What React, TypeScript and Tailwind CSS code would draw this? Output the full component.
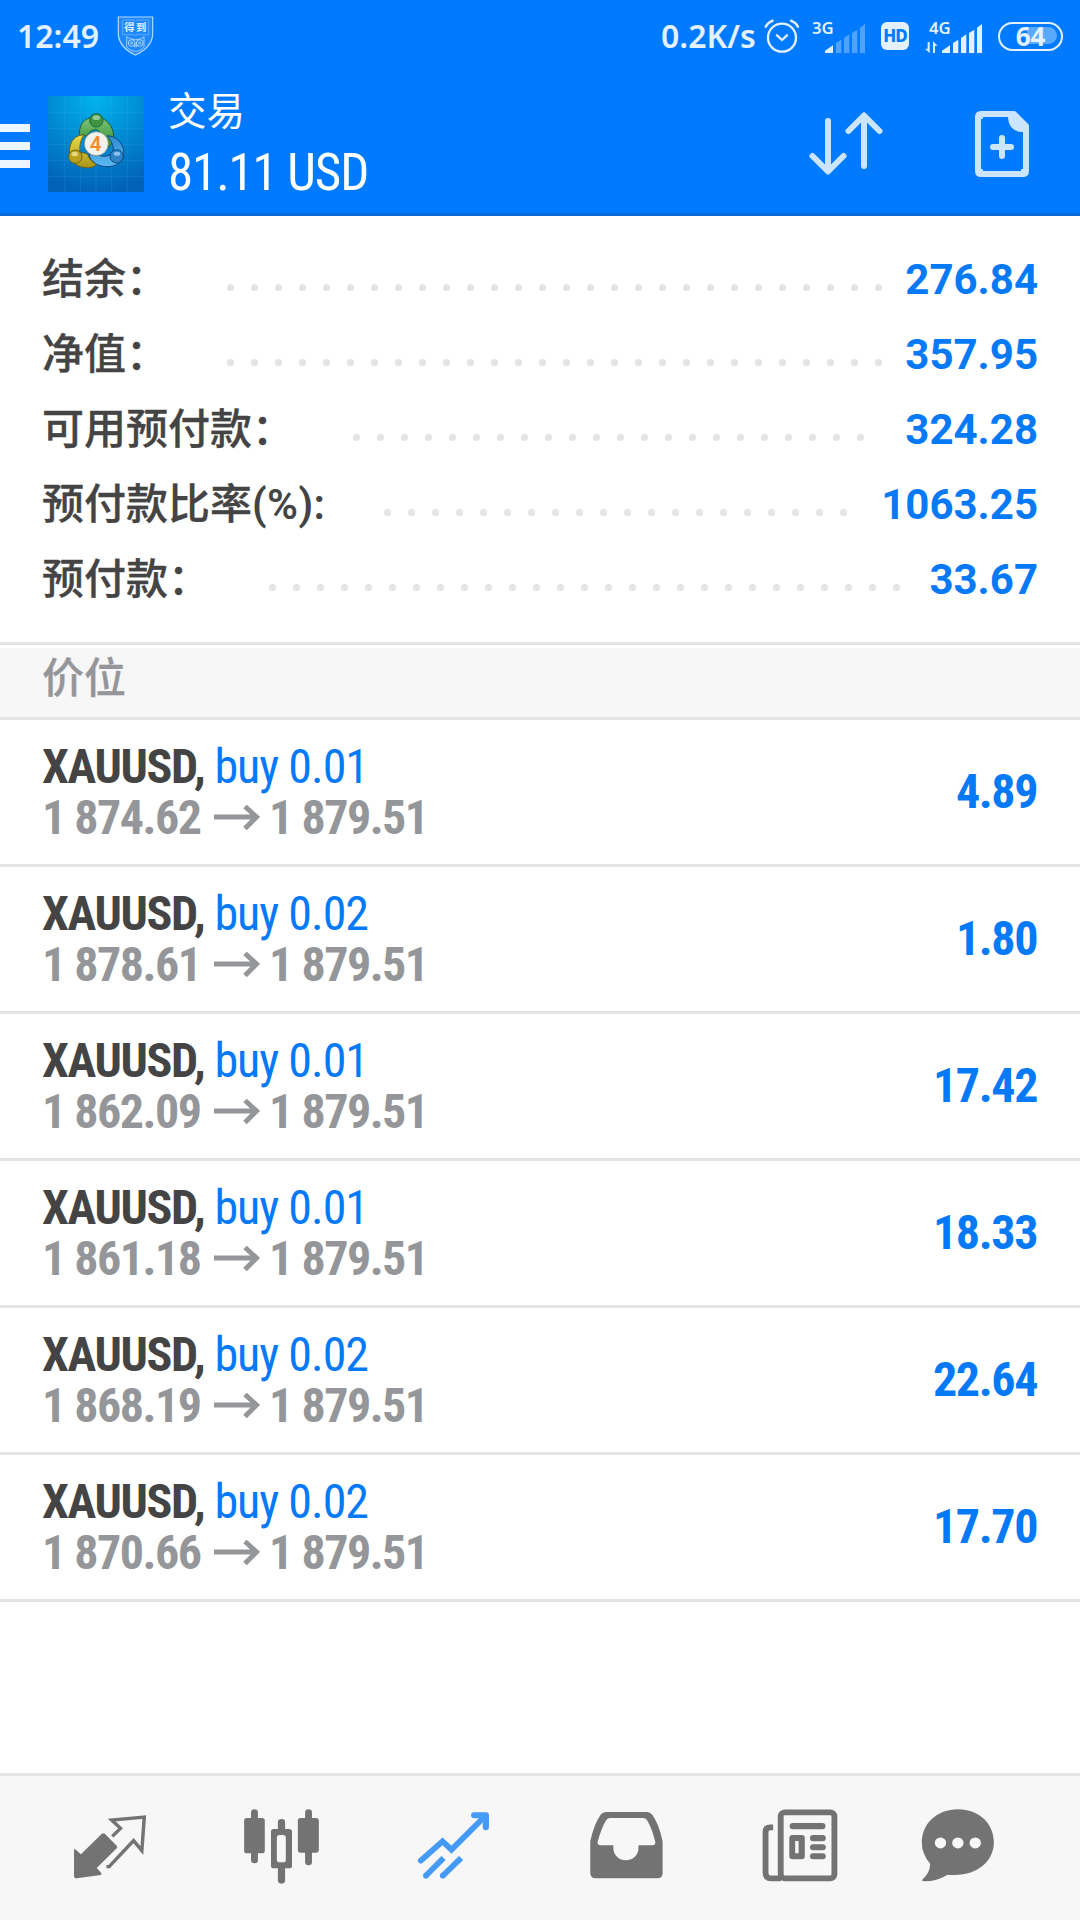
import type { ReactNode } from "react";

const summary = [
  { label: "结余：", value: "276.84", dots: 28 },
  { label: "净值：", value: "357.95", dots: 28 },
  { label: "可用预付款：", value: "324.28", dots: 22 },
  { label: "预付款比率", unit: "(%):", value: "1063.25", dots: 20 },
  { label: "预付款：", value: "33.67", dots: 27 },
];

const positions = [
  { symbol: "XAUUSD", side: "buy 0.01", open: "1 874.62", current: "1 879.51", profit: "4.89" },
  { symbol: "XAUUSD", side: "buy 0.02", open: "1 878.61", current: "1 879.51", profit: "1.80" },
  { symbol: "XAUUSD", side: "buy 0.01", open: "1 862.09", current: "1 879.51", profit: "17.42" },
  { symbol: "XAUUSD", side: "buy 0.01", open: "1 861.18", current: "1 879.51", profit: "18.33" },
  { symbol: "XAUUSD", side: "buy 0.02", open: "1 868.19", current: "1 879.51", profit: "22.64" },
  { symbol: "XAUUSD", side: "buy 0.02", open: "1 870.66", current: "1 879.51", profit: "17.70" },
];

export default function App() {
  return (
    <div className="flex h-[1920px] w-[1080px] flex-col overflow-hidden bg-white font-['Roboto','Noto_Sans_CJK_SC',sans-serif]">
      <header className="h-[216px] shrink-0 border-b-[3px] border-[#0b6bd6] bg-[#007aff]">
        <StatusBar />
        <TitleBar />
      </header>

      <section className="h-[426px] shrink-0 pt-[26px]">
        {summary.map((row) => (
          <SummaryRow key={row.label} {...row} />
        ))}
      </section>

      <div className="h-[78px] shrink-0 border-y-[3px] border-[#e4e4e4] pt-[3px]">
        <h2 className="h-[69px] bg-[#f7f7f7] pl-[42px] text-[42px] leading-[62px] font-medium text-[#949699] [-webkit-text-stroke:0.3px]">
          价位
        </h2>
      </div>

      <main className="grow">
        {positions.map((p) => (
          <PositionRow key={p.open} {...p} />
        ))}
      </main>

      <NavBar />
    </div>
  );
}

function StatusBar() {
  return (
    <div className="flex h-[72px] items-center pl-[17px] text-[#e3f1ff]">
      <span className="w-[83px] font-['Noto_Sans'] text-[32px] leading-[72px] font-semibold whitespace-nowrap">12:49</span>
      <ShieldIcon />
      <div className="ml-auto flex items-center pr-[17px]">
        <span className="mr-[7px] w-[96px] font-['Noto_Sans'] text-[32px] leading-[72px] font-semibold whitespace-nowrap">
          0.2K/s
        </span>
        <AlarmIcon />
        <SignalIcon network="3G" active={1} />
        <span className="mr-5 ml-[15px] flex h-7 w-7 items-center justify-center rounded-md bg-[#e3f1ff] font-['Noto_Sans'] text-[17px] font-extrabold tracking-[-1px] text-[#007aff]">
          HD
        </span>
        <SignalIcon network="4G" active={5} transfer />
        <Battery level={64} />
      </div>
    </div>
  );
}

function TitleBar() {
  return (
    <div className="flex h-[144px] text-white">
      <div className="flex w-12 flex-col gap-[10px] pt-[52px]">
        <span className="h-2 w-[30px] bg-[#ecf6ff]" />
        <span className="h-2 w-[30px] bg-[#ecf6ff]" />
        <span className="h-2 w-[30px] bg-[#ecf6ff]" />
      </div>
      <AppLogo />
      <div className="pt-4 pl-6">
        <h1 className="h-[61px] text-[38.5px] leading-[48px]">交易</h1>
        <p className="text-[51px] leading-[48px] tracking-[-1.1px] whitespace-nowrap [font-stretch:75%]">81.11 USD</p>
      </div>
      <div className="ml-auto flex">
        <svg className="mt-9 mr-[88px] h-[72px] w-[80px]" viewBox="806 108 80 72" fill="none" stroke="#cce5ff" strokeWidth="6" strokeLinecap="round" strokeLinejoin="round">
          <path d="M828 121V171M812.5 156L828 171.5L843.5 156" />
          <path d="M864 166V116M848.5 131L864 115.5L879.5 131" />
        </svg>
        <svg className="mt-9 mr-[46px] h-[72px] w-[60px]" viewBox="974 108 60 72" fill="none" stroke="#cce5ff" strokeWidth="6" strokeLinejoin="round">
          <path d="M981 114H1014L1026 126V171Q1026 174 1023 174H981Q978 174 978 171V117Q978 114 981 114Z" />
          <path d="M983 117Q981 117 981 119M981 169Q981 171 983 171M1021 171Q1023 171 1023 169" strokeWidth="3" />
          <path d="M1008 114V118Q1009 131 1022 132H1026V125L1015 113Z" fill="#cce5ff" stroke="none" />
          <path d="M1002 138V156M993 147H1011" strokeLinecap="round" />
        </svg>
      </div>
    </div>
  );
}

function SummaryRow({ label, unit, value, dots }: { label: string; unit?: string; value: string; dots: number }) {
  return (
    <div className="flex h-[75px] items-center pr-[42px] pl-[42px] text-[42px] leading-[75px] whitespace-nowrap">
      <span className="font-medium text-[#444] [-webkit-text-stroke:0.3px]">{label}</span>
      {unit && <span className="font-semibold tracking-[0.4px] text-[#444]">{unit}</span>}
      <span className="ml-[58.5px] flex gap-[17px] pt-[15px]">
        {Array.from({ length: dots }, (_, i) => (
          <i key={i} className="h-[7px] w-[7px] rounded-full bg-[#e4e4e4]" />
        ))}
      </span>
      <span className="ml-auto font-bold text-[#067af6]">{value}</span>
    </div>
  );
}

function PositionRow({
  symbol,
  side,
  open,
  current,
  profit,
}: {
  symbol: string;
  side: string;
  open: string;
  current: string;
  profit: string;
}) {
  return (
    <div className="flex h-[147px] items-center justify-between border-b-[3px] border-[#e4e4e4] pr-[43px] pl-[42px] text-[48px] leading-[51px] tracking-[-1.4px] whitespace-nowrap [font-stretch:75%]">
      <div>
        <p className="tracking-[-1px] text-[#067af6]">
          <b className="font-bold tracking-[-1.35px] text-[#444]">{symbol},</b> {side}
        </p>
        <p className="flex items-center font-bold tracking-[-1.5px] text-[#949699]">
          {open}
          <svg className="mr-[9.5px] ml-[13px] h-[26px] w-[46px]" viewBox="0 0 46 26" fill="none" stroke="currentColor" strokeWidth="5">
            <path d="M0 12H43M31 1.5L42.5 12L31 23.5" />
          </svg>
          {current}
        </p>
      </div>
      <b className="pb-[2px] font-bold text-[#067af6]">{profit}</b>
    </div>
  );
}

function NavBar() {
  return (
    <nav className="flex h-[147px] shrink-0 border-t-[3px] border-[#e4e4e4] bg-[#f7f7f7] pt-[30.7px] pl-6 text-[#737373]">
      <NavIcon viewBox="69.7 140 499.5 235">
        <path d="M215 267Q217 265 220 268L235 282L295 221Q300 217 305 221L339 256Q342 260 339 264L281 323L294 338Q296 342 292 344L223 354Q215 354 215 347Z" />
        <path d="M326 228L350 204L324 179L419 170L412 271L388 241L317 319H309" fill="none" stroke="currentColor" strokeWidth="10" />
      </NavIcon>
      <NavIcon viewBox="569.2 140 499.5 235">
        <rect x="729" y="147" width="20" height="162" rx="10" />
        <rect x="709" y="173" width="60" height="106" rx="8" />
        <rect x="886" y="147" width="20" height="168" rx="10" />
        <rect x="865" y="173" width="61" height="104" rx="8" />
        <rect x="807" y="176" width="21" height="194" rx="10" />
        <rect x="787" y="206" width="61" height="118" rx="8" />
        <rect x="804" y="224" width="26" height="82" rx="8" fill="#f7f7f7" />
      </NavIcon>
      <NavIcon viewBox="1068.7 140 499.5 235">
        <g fill="none" stroke="#459af5" strokeWidth="17">
          <path d="M1222 301L1285 243L1311 268L1409 167" strokeLinecap="round" />
          <path d="M1377 165H1411V201" strokeLinecap="round" strokeLinejoin="round" strokeWidth="18" />
          <path d="M1237 346L1288 293M1286 346L1339 293" />
        </g>
        <g fill="#459af5">
          <circle cx="1237" cy="346" r="8.5" />
          <circle cx="1286" cy="346" r="8.5" />
        </g>
      </NavIcon>
      <NavIcon viewBox="0 140 499.5 235">
        <path
          fillRule="evenodd"
          d="M192 155H311Q320 155 326 163Q346 192 356 243V339Q356 354 341 354H162Q146 354 146 339V243Q156 193 176 163Q182 155 192 155ZM203 173Q195 173 191 181Q177 206 167 246Q167 255 176 255H213V262C213 312 286 312 286 262V255H326Q335 255 335 246Q327 209 312 181Q308 173 300 173Z"
        />
      </NavIcon>
      <NavIcon viewBox="499.5 140 499.5 235">
        <g fill="none" stroke="currentColor" strokeWidth="17">
          <rect x="699" y="156" width="156" height="198" rx="12" />
          <path d="M677 201H669Q655 201 655 214V337Q655 354 671 354H700" />
        </g>
        <rect x="725" y="188" width="104" height="19" rx="9" />
        <path fillRule="evenodd" d="M733 224H760Q769 224 769 233V288Q769 297 760 297H733Q724 297 724 288V233Q724 224 733 224ZM741 242V279H751V242Z" />
        <rect x="784" y="224" width="46" height="19" rx="9" />
        <rect x="784" y="252" width="46" height="18" rx="9" />
        <rect x="784" y="279" width="46" height="18" rx="9" />
      </NavIcon>
      <NavIcon viewBox="999 140 499.5 235">
        <path d="M1214 147C1275 147 1318 190 1318 246C1318 306 1264 352 1184 343Q1149 364 1115 363Q1106 361 1112 356Q1133 336 1133 310Q1108 281 1109 246C1109 190 1153 147 1214 147Z" />
        <g fill="#f7f7f7">
          <circle cx="1163" cy="248" r="16.5" />
          <circle cx="1213.5" cy="248" r="16.5" />
          <circle cx="1264" cy="248" r="16.5" />
        </g>
      </NavIcon>
    </nav>
  );
}

function NavIcon({ viewBox, children }: { viewBox: string; children: ReactNode }) {
  return (
    <svg className="h-[78.3px] w-[172px] shrink-0" viewBox={viewBox} preserveAspectRatio="none" fill="currentColor">
      {children}
    </svg>
  );
}

function ShieldIcon() {
  return (
    <svg className="ml-[17px] h-10 w-[38px]" viewBox="351 46 114 120" fill="none" stroke="#b5d9ff" strokeWidth="3">
      <path d="M355 49H458V105Q452 143 406 163Q361 143 355 105Z" fill="#2088ff" strokeWidth="3.5" />
      <path d="M368 58H402L406 61L410 58H446V102H410L406 105L402 102H368Z" fill="#1f89ff" stroke="#7dbcff" strokeWidth="2" />
      <text x="373" y="90" fontSize="31" fontWeight="bold" fill="#e3f1ff" stroke="none" fontFamily="Noto Sans CJK SC" textLength="66">
        得到
      </text>
      <circle cx="395" cy="127" r="10" />
      <circle cx="419" cy="127" r="10" />
      <path d="M380 108Q388 117 407 117Q425 117 432 108V138Q424 151 407 152Q389 151 380 138ZM407 130L403 138H411Z" strokeWidth="2.5" />
      <circle cx="395" cy="127" r="3" />
      <circle cx="419" cy="127" r="3" />
    </svg>
  );
}

function AlarmIcon() {
  return (
    <svg className="mr-3 h-9 w-9" viewBox="372 54 108 108" fill="none" stroke="currentColor" strokeWidth="7" strokeLinecap="round">
      <circle cx="426" cy="113" r="42" />
      <path d="M411 106L426 120L441 106" />
      <path d="M377 80Q383 68 398 62M474 80Q468 68 453 62" />
    </svg>
  );
}

function SignalIcon({ network, active, transfer }: { network: string; active: number; transfer?: boolean }) {
  // each bar is a slice of the same slanted wedge
  const bars = ["M0 93V86L24 70V93Z", "M33 93V63L49 53V93Z", "M57 93V48L73 37V93Z", "M81 93V33L97 23V93Z", "M105 93V17L120 6V93Z"];
  return (
    <svg className="h-[33px] w-[54px] overflow-visible" viewBox="-39 -6 162 99" fill="currentColor">
      <text x="-39" y="36" fontSize="49" fontWeight="600" fontFamily="Noto Sans" textLength="65" lengthAdjust="spacingAndGlyphs">
        {network}
      </text>
      {bars.map((d, i) => (
        <path key={d} d={d} opacity={i < active ? 1 : 0.35} />
      ))}
      {transfer && <path d="M-37 93L-51 80H-43V60H-37ZM-27 93V58L-13 71H-21V93Z" />}
    </svg>
  );
}

function Battery({ level }: { level: number }) {
  return (
    <div className="relative ml-[15px] flex h-[29px] w-[65px] items-center justify-center rounded-full border-[2.5px] border-[#e3f1ff]">
      <span className="absolute top-[3.5px] right-[4px] h-[17px] w-[30px] rounded-r-full bg-[#59a9ff]" />
      <span className="relative font-['Noto_Sans'] text-[26px] leading-6 font-bold">{level}</span>
    </div>
  );
}

function AppLogo() {
  return (
    <svg className="mt-6 h-24 w-24" viewBox="144 288 288 288">
      <defs>
        <radialGradient id="sky" cx="0.5" cy="0" r="1">
          <stop offset="0" stopColor="#00b4ee" />
          <stop offset="0.55" stopColor="#0086cf" />
          <stop offset="1" stopColor="#0062b5" />
        </radialGradient>
        <linearGradient id="green" x1="0" y1="0" x2="0" y2="1">
          <stop offset="0" stopColor="#7cc576" />
          <stop offset="1" stopColor="#2f8a35" />
        </linearGradient>
        <linearGradient id="yellow" x1="0" y1="0" x2="0" y2="1">
          <stop offset="0" stopColor="#e9dc4a" />
          <stop offset="1" stopColor="#ab9417" />
        </linearGradient>
        <linearGradient id="blue" x1="0" y1="0" x2="0" y2="1">
          <stop offset="0" stopColor="#2d8bd0" />
          <stop offset="1" stopColor="#5cb8f2" />
        </linearGradient>
      </defs>
      <rect x="144" y="288" width="288" height="288" fill="url(#sky)" />
      <path d="M194 288V576M241 288V576M288 288V576M335 288V576M382 288V576M144 338H432M144 386H432M144 434H432M144 482H432M144 530H432" stroke="#62c4f5" strokeOpacity="0.22" strokeWidth="2" />
      <g strokeWidth="3">
        <path d="M238 402C238 362 264 351 288 352C316 351 340 376 341 409C341 430 330 437 322 446L308 414Q302 391 288 389Q270 389 261 407Q243 410 238 402Z" fill="url(#green)" stroke="#1e5e38" />
        <path d="M322 407Q352 409 366 436C381 464 365 499 323 500C294 501 270 484 267 463L300 467Q324 474 339 456Q345 435 322 407Z" fill="url(#blue)" stroke="#114a83" />
        <path d="M252 404Q220 405 211 435C202 468 217 500 257 503Q277 505 290 494Q266 480 263 462L240 456Q236 430 252 404Z" fill="url(#yellow)" stroke="#68601a" />
        <circle cx="289" cy="361" r="20" fill="#3e9344" stroke="#1e6638" />
        <circle cx="226" cy="470" r="20" fill="#b9a11d" stroke="#706415" />
        <circle cx="350" cy="469" r="20" fill="#2d83c6" stroke="#114a83" />
      </g>
      <ellipse cx="289" cy="353" rx="11" ry="7" fill="#b9e2b8" opacity="0.7" />
      <ellipse cx="224" cy="462" rx="10" ry="7" fill="#f5efa2" opacity="0.7" />
      <ellipse cx="351" cy="461" rx="10" ry="6" fill="#b5dcf8" opacity="0.7" />
      <circle cx="289" cy="431" r="36" fill="#f1f1ee" stroke="#6e8478" strokeWidth="2" />
      <text x="287" y="453" textAnchor="middle" fontSize="62" fontWeight="600" fill="#f28a2e" fontFamily="Roboto">
        4
      </text>
    </svg>
  );
}
